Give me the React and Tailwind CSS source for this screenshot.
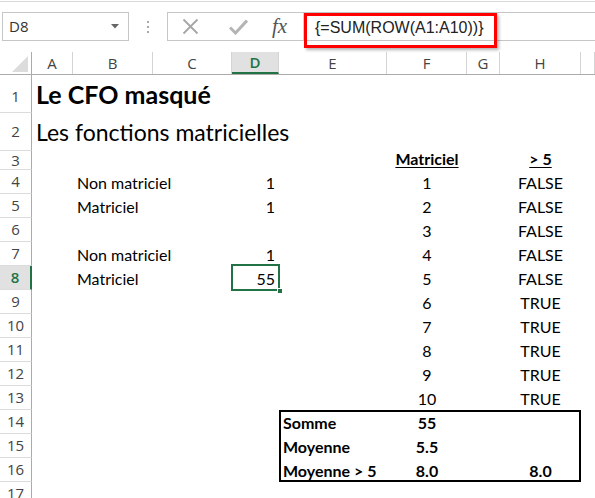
import React from "react";

// column widths match the sheet: A..H, then the rest of the window
const COLS = [
  { k: "A", w: "w-[41px]" },
  { k: "B", w: "w-[80px]" },
  { k: "C", w: "w-[79px]" },
  { k: "D", w: "w-[47px]" },
  { k: "E", w: "w-[108px]" },
  { k: "F", w: "w-[80px]" },
  { k: "G", w: "w-[33px]" },
  { k: "H", w: "w-[81px]" },
  { k: "I", w: "flex-1" },
];

const ALIGN = {
  l: "justify-start pl-[4px]",
  r: "justify-end pr-[4px]",
  c: "justify-center",
};

const c = (t, a = "c", cls = "") => ({ t, a, cls });
const B = "font-bold";

const ROWS = [
  { n: 1, h: "h-[38px]", lab: "pt-[6px]", pad: "pb-[4px]", cells: { A: c("Le CFO masqué", "l", "font-bold text-[25px] leading-[30px]") } },
  { n: 2, h: "h-[38px]", pad: "pb-[5px]", cells: { A: c("Les fonctions matricielles", "l", "text-[23px] leading-[28px]") } },
  { n: 3, h: "h-[19px]", cells: { F: c("Matriciel", "c", "font-bold underline underline-offset-2"), H: c("> 5", "c", "font-bold underline underline-offset-2") } },
  { n: 4, cells: { B: c("Non matriciel", "l"), D: c("1", "r"), F: c("1"), H: c("FALSE") } },
  { n: 5, cells: { B: c("Matriciel", "l"), D: c("1", "r"), F: c("2"), H: c("FALSE") } },
  { n: 6, cells: { F: c("3"), H: c("FALSE") } },
  { n: 7, cells: { B: c("Non matriciel", "l"), D: c("1", "r"), F: c("4"), H: c("FALSE") } },
  { n: 8, sel: true, cells: { B: c("Matriciel", "l"), D: c("55", "r"), F: c("5"), H: c("FALSE") } },
  { n: 9, cells: { F: c("6"), H: c("TRUE") } },
  { n: 10, cells: { F: c("7"), H: c("TRUE") } },
  { n: 11, cells: { F: c("8"), H: c("TRUE") } },
  { n: 12, cells: { F: c("9"), H: c("TRUE") } },
  { n: 13, cells: { F: c("10"), H: c("TRUE") } },
  {
    n: 14,
    cells: { E: c("Somme", "l", B), F: c("55", "c", B) },
    box: { E: "shadow-[inset_2px_2px_0_#000]", F: "shadow-[inset_0_2px_0_#000]", G: "shadow-[inset_0_2px_0_#000]", H: "shadow-[inset_-2px_2px_0_#000]" },
  },
  {
    n: 15,
    cells: { E: c("Moyenne", "l", B), F: c("5.5", "c", B) },
    box: { E: "shadow-[inset_2px_0_0_#000]", H: "shadow-[inset_-2px_0_0_#000]" },
  },
  {
    n: 16,
    cells: { E: c("Moyenne > 5", "l", B), F: c("8.0", "c", B), H: c("8.0", "c", B) },
    box: { E: "shadow-[inset_2px_-2px_0_#000]", F: "shadow-[inset_0_-2px_0_#000]", G: "shadow-[inset_0_-2px_0_#000]", H: "shadow-[inset_-2px_-2px_0_#000]" },
  },
  { n: 17, cells: {} },
];

const FormulaBar = () => (
  <div className="relative mt-px h-[51px] border-t border-[#dadada] pt-[10px] flex items-start">
    {/* Name box */}
    <div className="ml-[2px] w-[127px] h-[29px] border border-[#c6c6c6] flex items-center pl-[6px] text-[15px] text-[#333] font-['Open_Sans',sans-serif]">
      D8
      <svg className="ml-auto mr-[9px]" width="8" height="5" viewBox="0 0 8 5">
        <path d="M0 0 H8 L4 4.5 Z" fill="#666" />
      </svg>
    </div>
    {/* dots */}
    <div className="w-[38px] h-[29px] flex flex-col items-center justify-center gap-[3px]">
      <span className="w-[2px] h-[2px] bg-[#a8a8a8]" />
      <span className="w-[2px] h-[2px] bg-[#a8a8a8]" />
      <span className="w-[2px] h-[2px] bg-[#a8a8a8]" />
    </div>
    {/* Formula input */}
    <div className="flex-1 h-[29px] border border-r-0 border-[#c6c6c6] flex items-stretch">
      <div className="w-[135px] flex items-center">
        <svg className="ml-[14px]" width="17" height="17" viewBox="0 0 17 17">
          <path d="M1.5 1.5 L15.5 15.5 M15.5 1.5 L1.5 15.5" stroke="#a6a6a6" strokeWidth="1.8" fill="none" />
        </svg>
        <svg className="ml-[30px]" width="19" height="16" viewBox="0 0 19 16">
          <path d="M1 8.5 L6.5 14 L18 1.5" stroke="#b4b4b4" strokeWidth="3" fill="none" />
        </svg>
        <span className="ml-[24px] text-[21px] italic text-[#555] font-['Liberation_Serif',serif] leading-none">
          fx
        </span>
      </div>
      <div className="flex-1 border-l border-[#d4d4d4] flex items-center pl-[11px] pt-[3px] text-[16px] text-[#222] font-['Liberation_Sans',sans-serif]">
        {"{=SUM(ROW(A1:A10))}"}
      </div>
    </div>
    {/* red annotation frame */}
    <div className="absolute left-[304px] top-[11px] w-[193px] h-[35px] border-[3px] border-[#ff0000] shadow-[2px_2px_3px_rgba(0,0,0,0.3)]" />
  </div>
);

const ColumnHeader = () => (
  <div className="h-[23px] flex border-b border-[#ababab] font-['Open_Sans',sans-serif] text-[15px] text-[#444]">
    <div className="w-[32px] shrink-0 border-r border-[#ababab] flex items-end justify-end pr-[3px] pb-[2px]">
      <svg width="16" height="16" viewBox="0 0 16 16">
        <path d="M16 0 V16 H0 Z" fill="#dcdcdc" />
      </svg>
    </div>
    {COLS.map((col) =>
      col.k === "D" ? (
        <div key={col.k} className={`${col.w} shrink-0 border-r border-[#d4d4d4] bg-[#e1e1e1] border-b-2 border-b-[#217346] text-[#217346] font-semibold flex items-center justify-center`}>
          D
        </div>
      ) : (
        <div key={col.k} className={`${col.w} shrink-0 border-r border-[#d4d4d4] flex items-center justify-center`}>
          {col.k === "I" ? "" : col.k}
        </div>
      )
    )}
  </div>
);

const SheetRow = ({ row }) => (
  <div className={`${row.h || "h-[24px]"} flex`}>
    <div
      className={`w-[32px] shrink-0 border-b border-b-[#dcdcdc] flex items-center justify-center font-['Open_Sans',sans-serif] text-[15px] ${
        row.sel
          ? "bg-[#e1e1e1] text-[#217346] font-semibold border-r-2 border-r-[#217346]"
          : "text-[#444] border-r border-r-[#ababab]"
      } ${row.lab || ""}`}
    >
      {row.n}
    </div>
    {COLS.map((col) => {
      const cell = row.cells[col.k];
      const box = row.box ? row.box[col.k] || "" : "";
      const selected = row.sel && col.k === "D";
      return (
        <div
          key={col.k}
          className={`${col.w} shrink-0 relative flex items-end ${row.pad || "pb-[2px]"} whitespace-nowrap ${box} ${cell ? ALIGN[cell.a] : ""}`}
        >
          {cell && <span className={`text-[16px] leading-[19px] text-black ${cell.cls}`}>{cell.t}</span>}
          {selected && (
            <>
              <div className="absolute -left-px -top-[2px] -right-px -bottom-px border-2 border-[#217346]" />
              <div className="absolute -right-[4px] -bottom-[4px] w-[6px] h-[6px] bg-[#217346] border border-white" />
            </>
          )}
        </div>
      );
    })}
  </div>
);

export default function App() {
  return (
    <div className="w-[595px] h-[498px] overflow-hidden bg-white font-['Lato',sans-serif]">
      <FormulaBar />
      <ColumnHeader />
      {ROWS.map((row) => (
        <SheetRow key={row.n} row={row} />
      ))}
    </div>
  );
}
